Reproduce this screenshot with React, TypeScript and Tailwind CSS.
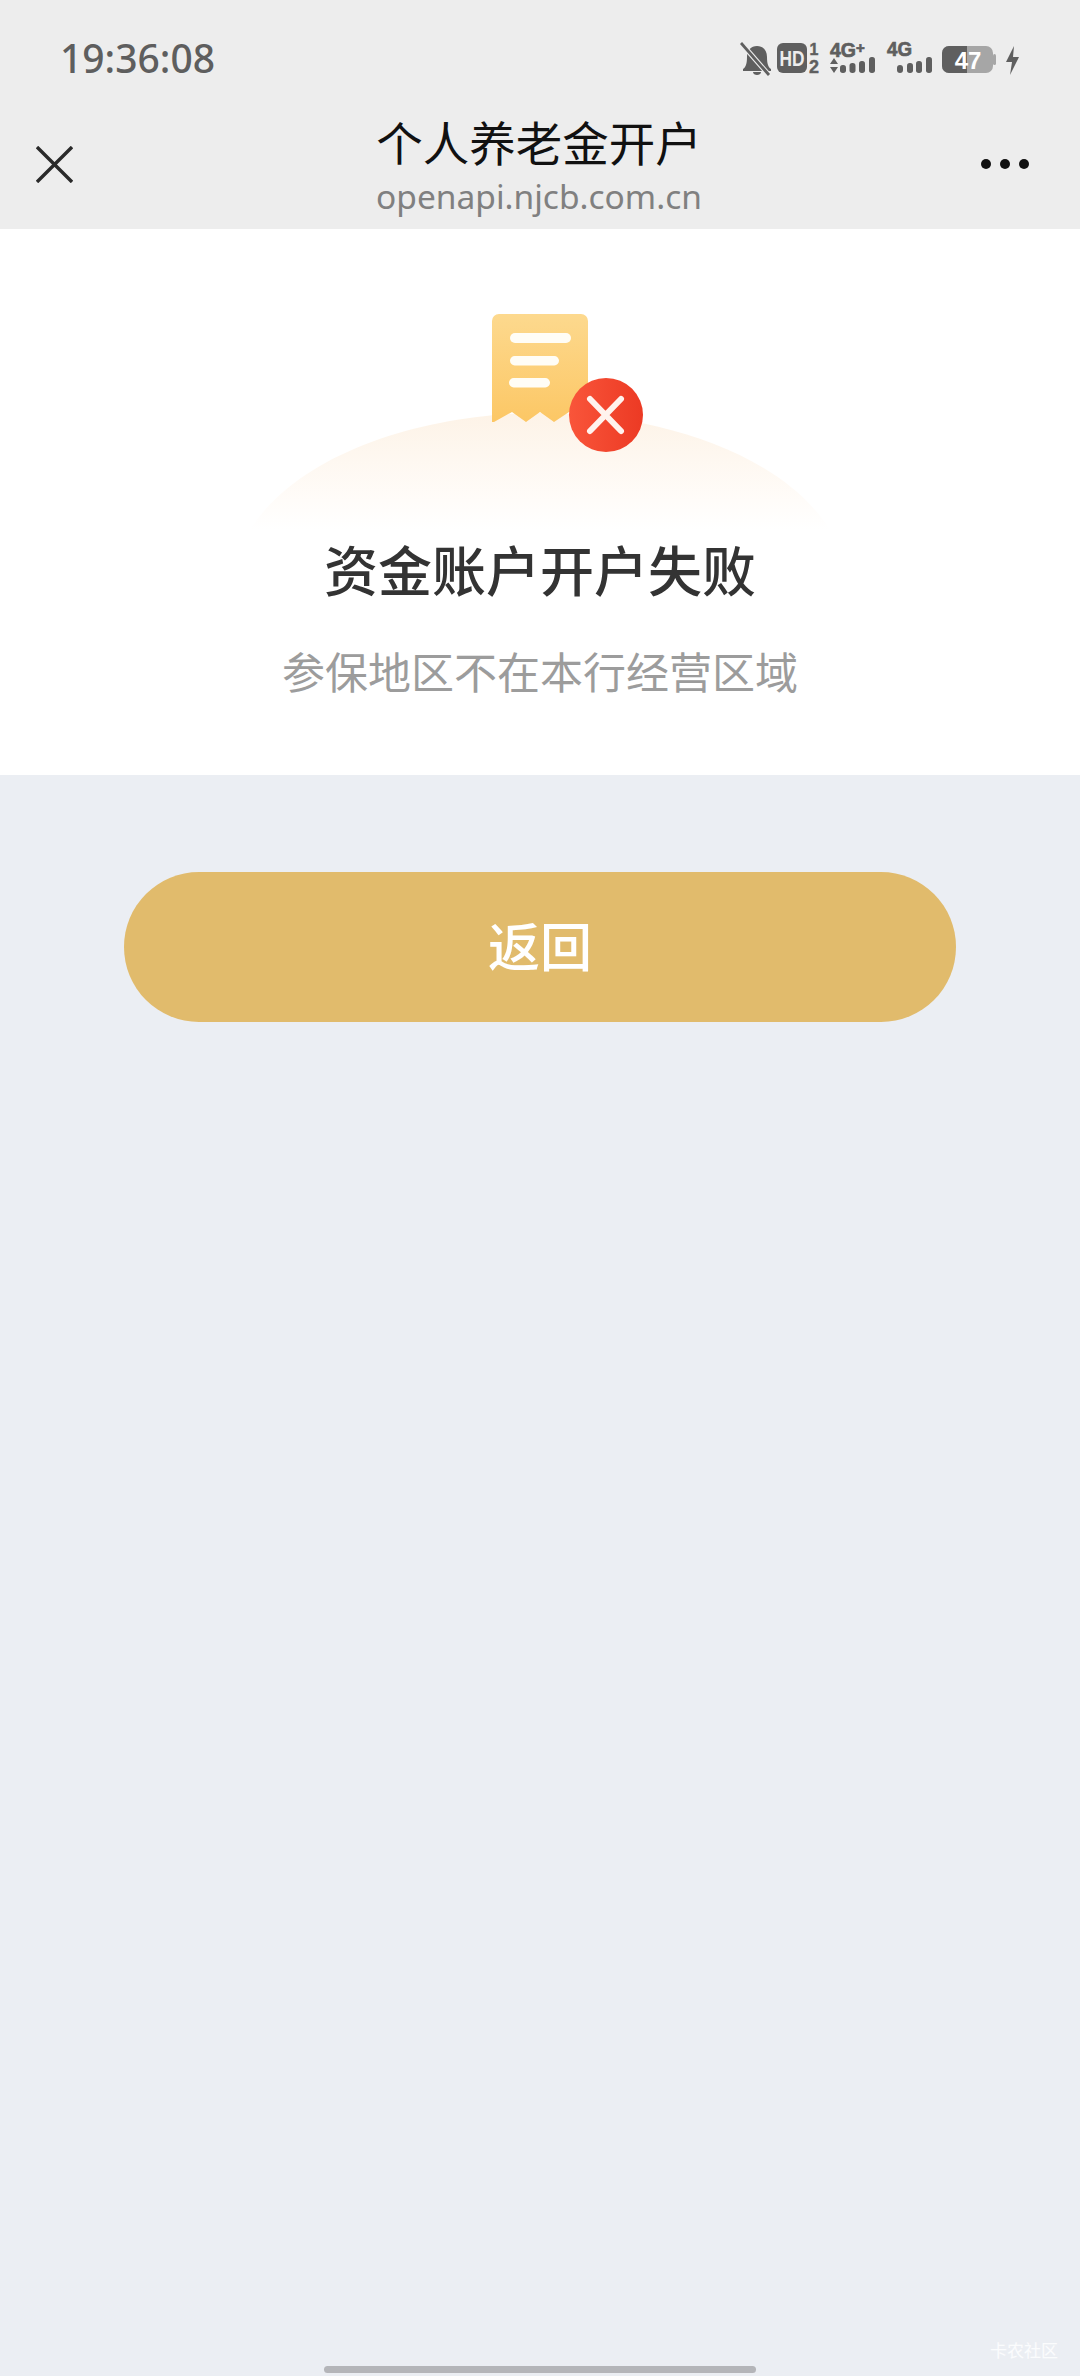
const cjk = "font-['Noto_Sans_CJK_SC','Noto_Sans',sans-serif]";

function StatusIcons() {
  return (
    <svg width="290" height="40" viewBox="0 -3 290 40" className="block">
      {/* muted bell */}
      <path d="M3 29c3-2 4-6 4-12 0-7 4-11 10-11s10 4 10 11c0 6 1 10 4 12v2H3z" fill="#5f5f5f" />
      <path d="M13 32h8c0 2-2 3-4 3s-4-1-4-3z" fill="#5f5f5f" />
      <path d="M1 3l27 31" stroke="#ededed" strokeWidth="5" />
      <path d="M1 3l28 32" stroke="#5f5f5f" strokeWidth="2.8" />
      {/* HD + sim */}
      <rect x="37" y="3" width="30" height="30" rx="6" fill="#5f5f5f" />
      <text x="52" y="26" textAnchor="middle" fontFamily="Liberation Sans" fontWeight="700" fontSize="22" fill="#ededed" textLength="25" lengthAdjust="spacingAndGlyphs">HD</text>
      <text x="74" y="15" textAnchor="middle" fontFamily="Liberation Sans" fontWeight="700" fontSize="16" fill="#5f5f5f" stroke="#5f5f5f" strokeWidth="0.4">1</text>
      <text x="74" y="33" textAnchor="middle" fontFamily="Liberation Sans" fontWeight="700" fontSize="18" fill="#5f5f5f" stroke="#5f5f5f" strokeWidth="0.4">2</text>
      {/* 4G+ */}
      <text x="90" y="17" fontFamily="Liberation Sans" fontWeight="700" fontSize="20" fill="#5f5f5f" stroke="#5f5f5f" strokeWidth="0.7" textLength="26" lengthAdjust="spacingAndGlyphs">4G</text>
      <text x="116" y="13" fontFamily="Liberation Sans" fontWeight="700" fontSize="15" fill="#5f5f5f" stroke="#5f5f5f" strokeWidth="0.7">+</text>
      <path d="M90 24l4-6 4 6zM90 27h8l-4 6z" fill="#5f5f5f" />
      <rect x="100" y="25" width="6" height="8" rx="2.7" fill="#5f5f5f" />
      <rect x="109.5" y="23" width="6" height="10" rx="2.7" fill="#5f5f5f" />
      <rect x="119" y="21" width="6" height="12" rx="2.7" fill="#5f5f5f" />
      <rect x="129" y="17" width="6" height="16" rx="2.7" fill="#5f5f5f" />
      {/* 4G */}
      <text x="147" y="16" fontFamily="Liberation Sans" fontWeight="700" fontSize="20" fill="#5f5f5f" stroke="#5f5f5f" strokeWidth="0.7" textLength="25" lengthAdjust="spacingAndGlyphs">4G</text>
      <rect x="157" y="25" width="6" height="8" rx="3" fill="#5f5f5f" />
      <rect x="167" y="23" width="6" height="10" rx="2.7" fill="#5f5f5f" />
      <rect x="176" y="21" width="6" height="12" rx="2.7" fill="#5f5f5f" />
      <rect x="186" y="17" width="6" height="16" rx="2.7" fill="#5f5f5f" />
      {/* battery */}
      <rect x="202" y="6" width="51" height="27" rx="7" fill="#a6a6a6" />
      <path d="M209 6h18v27h-18a7 7 0 0 1-7-7V13a7 7 0 0 1 7-7z" fill="#5f5f5f" />
      <rect x="253" y="14" width="3" height="11" rx="1.5" fill="#a6a6a6" />
      <text x="228" y="29" textAnchor="middle" fontFamily="Liberation Sans" fontWeight="700" fontSize="24" fill="#ffffff">47</text>
      {/* bolt */}
      <path d="M274 6l-8 16h6l-2 13 9-18h-6z" fill="#5f5f5f" />
    </svg>
  );
}

function FailIllustration() {
  return (
    <svg width="600" height="225" viewBox="240 310 600 225" className="block">
      <defs>
        <linearGradient id="hill" x1="0" y1="0" x2="0" y2="1">
          <stop offset="0" stopColor="#fdf3e7" />
          <stop offset="0.75" stopColor="#fffcf9" />
          <stop offset="1" stopColor="#ffffff" />
        </linearGradient>
        <linearGradient id="doc" x1="0" y1="0" x2="0" y2="1">
          <stop offset="0" stopColor="#fdd98e" />
          <stop offset="1" stopColor="#fcc765" />
        </linearGradient>
        <linearGradient id="badge" x1="0" y1="0" x2="1" y2="0">
          <stop offset="0" stopColor="#f9553a" />
          <stop offset="1" stopColor="#ec3a24" />
        </linearGradient>
      </defs>
      <path d="M250 530C300 450 430 413 540 413s240 37 290 117z" fill="url(#hill)" />
      <path d="M499 314h82a7 7 0 0 1 7 7v91h-19l-15 10-14-10-14 10-14-10-18 10h-2V321a7 7 0 0 1 7-7z" fill="url(#doc)" />
      <rect x="510" y="333" width="61" height="10" rx="5" fill="#fffdf6" />
      <rect x="510" y="356" width="49" height="9.5" rx="4.7" fill="#fffdf6" />
      <rect x="509" y="378" width="41" height="9.5" rx="4.7" fill="#fffdf6" />
      <circle cx="606" cy="415" r="37" fill="url(#badge)" />
      <path d="M590 399l31 32M621 399l-31 32" stroke="#fff3ee" strokeWidth="6" strokeLinecap="round" />
    </svg>
  );
}

export default function App() {
  return (
    <div className={`relative flex min-h-[2376px] flex-col bg-[#ebeef3] ${cjk}`}>
      <header className="h-[229px] bg-[#ededed]">
        <div className="flex h-[76px] items-center justify-between pl-[60px] pr-[50px] pt-[38px]">
          <span className="font-['Noto_Sans'] text-[39px] leading-none font-medium text-[#5e5e5e]">19:36:08</span>
          <StatusIcons />
        </div>
        <div className="grid grid-cols-[1fr_auto_1fr] pt-[40px]">
          <div className="pl-[36px] pt-[30px]">
            <svg width="37" height="37" viewBox="0 0 37 37" className="block">
              <path d="M1 1l35 35M36 1L1 36" stroke="#2a2a2a" strokeWidth="3.4" />
            </svg>
          </div>
          <div className="flex flex-col items-center pr-[2px]">
            <h1 className="-mt-[5px] text-[46.5px] leading-[60px] text-[#111]">个人养老金开户</h1>
            <p className="mt-[3px] font-['Noto_Sans'] text-[33.5px] leading-[44px] text-[#808080]">openapi.njcb.com.cn</p>
          </div>
          <div className="flex justify-end pr-[51px] pt-[43px]">
            <div className="flex w-[48px] justify-between">
              <span className="h-[10px] w-[10px] rounded-full bg-[#111]" />
              <span className="h-[10px] w-[10px] rounded-full bg-[#111]" />
              <span className="h-[10px] w-[10px] rounded-full bg-[#111]" />
            </div>
          </div>
        </div>
      </header>

      <section className="flex h-[546px] flex-col items-center bg-white pt-[81px]">
        <FailIllustration />
        <h2 className="-mt-[4px] text-[54px] leading-[76px] font-medium text-[#333]">资金账户开户失败</h2>
        <p className="mt-[33px] text-[43px] leading-[60px] text-[#9c9c9c]">参保地区不在本行经营区域</p>
      </section>

      <div className="px-[124px] pt-[97px]">
        <button className="flex h-[150px] w-full items-center justify-center rounded-full bg-[#e1bb6c] pb-[4px] text-[52px] font-medium text-white">
          返回
        </button>
      </div>

      <span className="absolute right-[22px] bottom-[18px] text-[17px] leading-none text-white/80">卡农社区</span>
      <div className="absolute bottom-[3px] left-[324px] h-[7px] w-[432px] rounded-full bg-[#b4b5b9]" />
    </div>
  );
}
